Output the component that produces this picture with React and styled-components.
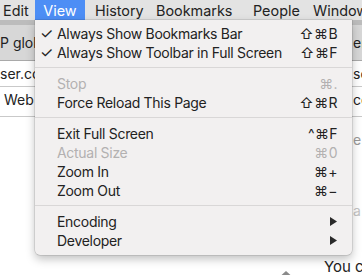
import React from "react";
import styled, { createGlobalStyle } from "styled-components";

const GlobalStyle = createGlobalStyle`
  html, body {
    margin: 0;
    padding: 0;
    width: 362px;
    height: 275px;
    overflow: hidden;
    background: #ffffff;
    font-family: Inter, "Noto Sans", sans-serif;
    -webkit-font-smoothing: antialiased;
  }
`;

// cell widths taken from where each title starts in the menu bar
const barItems = [
  { name: "Edit", width: 35, pad: 3 },
  { name: "View", width: 50, pad: 0 },
  { name: "History", width: 61, pad: 10 },
  { name: "Bookmarks", width: 97, pad: 10 },
  { name: "People", width: 60, pad: 10 },
  { name: "Window", width: 70, pad: 10 },
];

const menu = [
  { check: true, label: "Always Show Bookmarks Bar", keys: "⇧⌘B" },
  { check: true, label: "Always Show Toolbar in Full Screen", keys: "⇧⌘F" },
  { sep: true },
  { label: "Stop", keys: "⌘.", disabled: true },
  { label: "Force Reload This Page", keys: "⇧⌘R" },
  { sep: true },
  { label: "Exit Full Screen", keys: "^⌘F" },
  { label: "Actual Size", keys: "⌘0", disabled: true },
  { label: "Zoom In", keys: "⌘+" },
  { label: "Zoom Out", keys: "⌘−" },
  { sep: true },
  { label: "Encoding", sub: true },
  { label: "Developer", sub: true },
];

function App() {
  return (
    <>
      <GlobalStyle />
      <Screen>
        <MenuBar>
          {barItems.map((item) => (
            <BarItem
              key={item.name}
              $active={item.name === "View"}
              $width={item.width}
              $pad={item.pad}
            >
              {item.name}
            </BarItem>
          ))}
        </MenuBar>
        <Page>
          <Toolbar>
            <span>P global</span>
            <RightCut>er</RightCut>
          </Toolbar>
          <Row $h={26}>
            <span>ser.com</span>
            <RightCut>sc</RightCut>
          </Row>
          <Row $h={30} $top>
            <Indent>Web site</Indent>
            <RightCut>co</RightCut>
          </Row>
          <Body>
            <Faint $top={14}>e</Faint>
            <Faint $top={85} $light>a</Faint>
          </Body>
          <Footer>
            <Caret />
            <span>You c</span>
          </Footer>
        </Page>
        <Dropdown>
          {menu.map((m, i) =>
            m.sep ? (
              <Separator key={i} />
            ) : (
              <Item key={i} $disabled={m.disabled}>
                <Check>{m.check ? "✓" : ""}</Check>
                <Label>{m.label}</Label>
                {m.sub ? (
                  <Arrow viewBox="0 0 7 9">
                    <path d="M0 0 L7 4.5 L0 9 Z" fill="#2a2a2a" />
                  </Arrow>
                ) : (
                  <Keys>{m.keys}</Keys>
                )}
              </Item>
            )
          )}
        </Dropdown>
      </Screen>
    </>
  );
}

const Screen = styled.div`
  position: relative;
  width: 362px;
  height: 275px;
  overflow: hidden;
`;

const MenuBar = styled.div`
  display: flex;
  height: 20px;
  background: #e3e3e3;
  white-space: nowrap;
`;

const BarItem = styled.div`
  display: flex;
  align-items: center;
  justify-content: ${(p) => (p.$active ? "center" : "flex-start")};
  flex: none;
  width: ${(p) => p.$width}px;
  box-sizing: border-box;
  padding-left: ${(p) => p.$pad}px;
  font-size: 14.4px;
  color: ${(p) => (p.$active ? "#ffffff" : "#222222")};
  background: ${(p) => (p.$active ? "#4d8ef5" : "transparent")};
`;

const Page = styled.div`
  display: flex;
  flex-direction: column;
  font-size: 14px;
  color: #222;
`;

const Toolbar = styled.div`
  display: flex;
  align-items: center;
  height: 35px;
  border-top: 5px solid #bcbcbc;
  border-bottom: 1px solid #a9a9a9;
  background: #d7d7d7;
  white-space: nowrap;
`;

const Row = styled.div`
  display: flex;
  align-items: ${(p) => (p.$top ? "flex-start" : "center")};
  height: ${(p) => p.$h}px;
  box-sizing: border-box;
  padding-top: ${(p) => (p.$top ? "4px" : "0")};
  border-bottom: 1px solid #c9c9c9;
  white-space: nowrap;
`;

const Indent = styled.span`
  padding-left: 4px;
`;

const RightCut = styled.span`
  margin-left: auto;
  width: 9px;
  overflow: hidden;
`;

const Body = styled.div`
  position: relative;
  height: 140px;
`;

const Faint = styled.span`
  position: absolute;
  left: 353px;
  top: ${(p) => p.$top}px;
  color: ${(p) => (p.$light ? "#c4c4c4" : "#9a9a9a")};
`;

const Footer = styled.div`
  display: flex;
  align-items: flex-end;
  gap: 28px;
  padding-left: 276px;
  font-size: 15px;
  white-space: nowrap;
`;

const Caret = styled.div`
  width: 0;
  height: 0;
  margin-bottom: -4px;
  border-left: 10px solid transparent;
  border-right: 10px solid transparent;
  border-bottom: 9px solid #8a8a8a;
`;

const Dropdown = styled.div`
  position: absolute;
  top: 20px;
  left: 35px;
  width: 317px;
  padding: 3.5px 0 5px;
  box-sizing: border-box;
  background: #f2f0f0;
  border-radius: 0 0 5px 5px;
  box-shadow: 0 4px 10px rgba(0, 0, 0, 0.25), 0 0 0 0.5px rgba(0, 0, 0, 0.18);
`;

const Item = styled.div`
  display: flex;
  align-items: center;
  height: 19px;
  padding: 0 14px 0 5px;
  font-size: 14px;
  letter-spacing: -0.3px;
  color: ${(p) => (p.$disabled ? "#b3b1b1" : "#222222")};
`;

const Check = styled.span`
  width: 17px;
  font-size: 15px;
  letter-spacing: 0;
`;

const Label = styled.span`
  flex: 1;
  white-space: nowrap;
`;

const Keys = styled.span`
  font-size: 14px;
  letter-spacing: 0.4px;
`;

const Arrow = styled.svg`
  width: 7px;
  height: 9px;
  margin-right: 1px;
`;

const Separator = styled.div`
  height: 1px;
  margin: 5px 0 6px;
  background: #d9d7d7;
`;

export default App;
